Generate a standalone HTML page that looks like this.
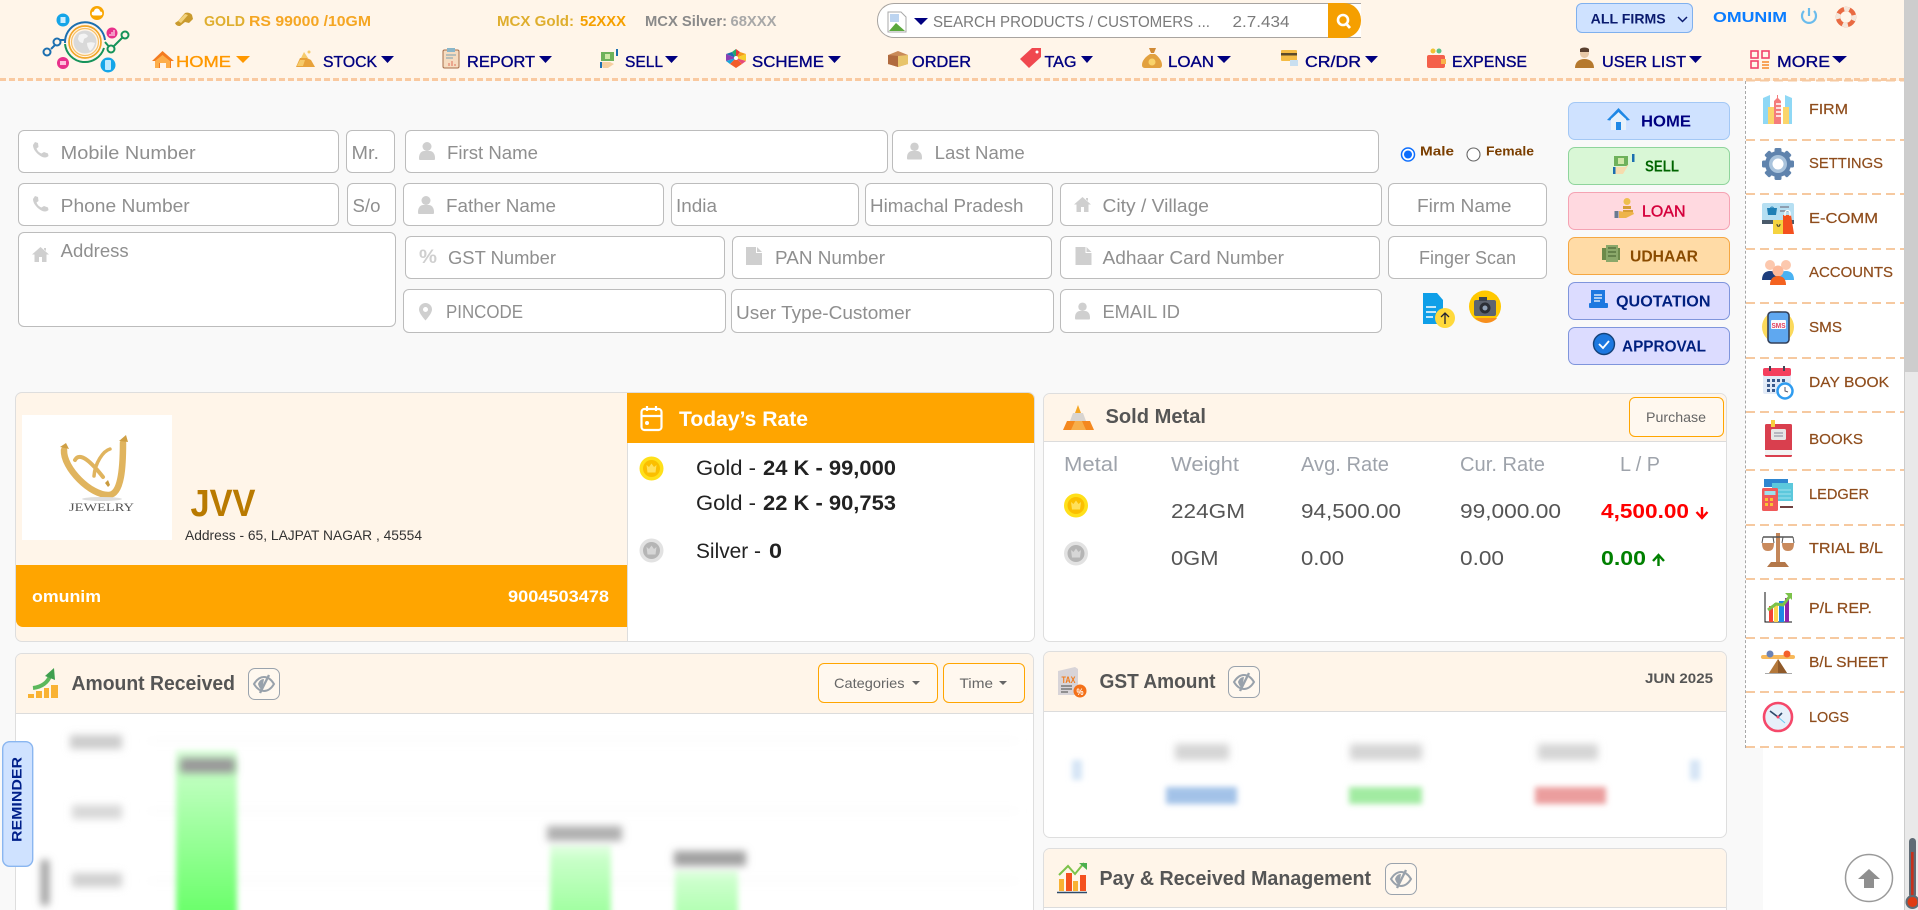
<!DOCTYPE html>
<html lang="en"><head><meta charset="utf-8"><title>Dashboard</title>
<style>
html,body{margin:0;padding:0;width:1918px;height:910px;overflow:hidden;background:#f9f9f9;font-family:"Liberation Sans",sans-serif}
#root{position:relative;width:1918px;height:910px;overflow:hidden;background:#f9f9f9}
.b{position:absolute;box-sizing:border-box}
.i{position:absolute;box-sizing:border-box;background:#fff;border:1.5px solid #bcbcbc;border-radius:6px}
.btn{position:absolute;box-sizing:border-box;left:1568px;width:162px;height:38px;border-radius:7px;border:1.5px solid}
.card{position:absolute;box-sizing:border-box;background:#fff;border:1.5px solid #dedede;border-radius:7px;overflow:hidden}
.ch{position:absolute;left:0;right:0;top:0;background:#fff5e9;border-bottom:1.5px solid #dcdcdc}
.ob{position:absolute;box-sizing:border-box;border:1.5px solid #ffa500;border-radius:6px;background:#fff8ef}
.eye{position:absolute;box-sizing:border-box;border:1.5px solid #9aa3ad;border-radius:7px;background:#fff8ef}
svg#o{position:absolute;left:0;top:0;width:1918px;height:910px}
text{font-family:"Liberation Sans",sans-serif}
.ph{font-size:18px;fill:#8f8f8f}
.nav{font-size:16px;fill:#000080;stroke:#000080;stroke-width:.35}
.side{font-size:14.5px;fill:#8f4d1c;stroke:#8f4d1c;stroke-width:.2}
.bt{font-size:15.5px;font-weight:700}
.hd{font-size:20px;font-weight:700;fill:#555}
.th{font-size:20px;fill:#9ea3ab}
.td{font-size:20.5px;fill:#555}
.rt{font-size:21px;fill:#222}
.rb{font-size:21px;fill:#222;font-weight:700}
</style></head><body><div id="root">

<!-- header -->
<div class="b" style="left:0;top:0;width:1905px;height:78px;background:#fff5e9"></div>
<div class="b" style="left:0;top:78px;width:1905px;height:3px;background:repeating-linear-gradient(90deg,#f9c9a0 0 6px,transparent 6px 9px);background-color:#fff5e9"></div>
<div class="b" style="left:877px;top:3px;width:484px;height:35px;background:#fff;border:1.5px solid #a8a4a0;border-radius:17px 0 0 17px;border-right:0"></div>
<div class="b" style="left:1328px;top:3px;width:33px;height:35px;background:#f59f00;border-radius:0 17px 17px 0"></div>
<div class="b" style="left:1576px;top:3px;width:117px;height:30px;background:#cfe2ff;border:1.5px solid #7fb0ee;border-radius:6px"></div>

<!-- sidebar & scrollbar -->
<div class="b" style="left:1763px;top:81px;width:142px;height:829px;background:#fff"></div>
<div class="b" style="left:1745px;top:81px;width:159px;height:667px;background:#fff;border-left:1px dashed #a8a8a8"></div>
<div class="b" style="left:1904px;top:0;width:14px;height:910px;background:#e9e9e9;border-left:1px solid #ccc"></div>
<div class="b" style="left:1905px;top:0;width:13px;height:372px;background:#cdcdcd"></div>

<!-- form -->
<div class="i" style="left:18px;top:130px;width:321px;height:43px"></div>
<div class="i" style="left:346px;top:130px;width:49px;height:43px"></div>
<div class="i" style="left:405px;top:130px;width:483px;height:43px"></div>
<div class="i" style="left:892px;top:130px;width:487px;height:43px"></div>
<div class="i" style="left:18px;top:183px;width:321px;height:43px"></div>
<div class="i" style="left:347px;top:183px;width:49px;height:43px"></div>
<div class="i" style="left:403px;top:183px;width:261px;height:43px"></div>
<div class="i" style="left:671px;top:183px;width:188px;height:43px"></div>
<div class="i" style="left:865px;top:183px;width:188px;height:43px"></div>
<div class="i" style="left:1060px;top:183px;width:322px;height:43px"></div>
<div class="i" style="left:1388px;top:183px;width:159px;height:43px"></div>
<div class="i" style="left:18px;top:232px;width:378px;height:95px"></div>
<div class="i" style="left:405px;top:236px;width:320px;height:43px"></div>
<div class="i" style="left:732px;top:236px;width:320px;height:43px"></div>
<div class="i" style="left:1060px;top:236px;width:320px;height:43px"></div>
<div class="i" style="left:1388px;top:236px;width:159px;height:43px"></div>
<div class="i" style="left:403px;top:289px;width:323px;height:44px"></div>
<div class="i" style="left:731px;top:289px;width:323px;height:44px"></div>
<div class="i" style="left:1060px;top:289px;width:322px;height:44px"></div>

<div class="btn" style="top:102px;background:#cfe2ff;border-color:#a3c8f5"></div>
<div class="btn" style="top:147px;background:#d9f7d6;border-color:#8fd49c"></div>
<div class="btn" style="top:192px;background:#ffd9e0;border-color:#f5a3b3"></div>
<div class="btn" style="top:237px;background:#ffdba6;border-color:#f5a742"></div>
<div class="btn" style="top:282px;background:#dcdcff;border-color:#7f95dc"></div>
<div class="btn" style="top:327px;background:#dcdcff;border-color:#7f95dc"></div>

<!-- firm card + today's rate -->
<div class="card" style="left:15px;top:392px;width:1020px;height:250px;background:#fff5e9">
  <div class="b" style="left:6px;top:22px;width:150px;height:125px;background:#fff"></div>
  <div class="b" style="left:0;top:172px;width:611px;height:62px;background:#ffa500;border-radius:0 0 0 7px"></div>
  <div class="b" style="left:611px;top:0;width:408px;height:248px;background:#fff;border-left:1px solid #ddd"></div>
  <div class="b" style="left:611px;top:0;width:408px;height:50px;background:#ffa500"></div>
</div>
<!-- sold metal -->
<div class="card" style="left:1043px;top:393px;width:684px;height:249px">
  <div class="ch" style="height:47px"></div>
</div>
<div class="ob" style="left:1629px;top:397px;width:95px;height:40px"></div>
<!-- amount received -->
<div class="card" style="left:15px;top:653px;width:1019px;height:265px">
  <div class="ch" style="height:59px"></div>
</div>
<div class="ob" style="left:818px;top:663px;width:120px;height:40px"></div>
<div class="ob" style="left:943px;top:663px;width:82px;height:40px"></div>
<div class="eye" style="left:248px;top:668px;width:32px;height:32px"></div>
<!-- gst -->
<div class="card" style="left:1043px;top:651px;width:684px;height:187px">
  <div class="ch" style="height:59px"></div>
</div>
<div class="eye" style="left:1228px;top:666px;width:32px;height:32px"></div>
<!-- pay -->
<div class="card" style="left:1043px;top:848px;width:684px;height:70px">
  <div class="ch" style="height:58px"></div>
</div>
<div class="eye" style="left:1385px;top:863px;width:32px;height:32px"></div>

<svg id="o" viewBox="0 0 1918 910" xmlns="http://www.w3.org/2000/svg">
<defs>
<filter id="bl" filterUnits="userSpaceOnUse" x="0" y="600" width="1918" height="400"><feGaussianBlur stdDeviation="4"/></filter>
<filter id="bs" filterUnits="userSpaceOnUse" x="0" y="600" width="1918" height="400"><feGaussianBlur stdDeviation="3"/></filter>
<linearGradient id="g1" gradientUnits="userSpaceOnUse" x1="0" y1="748" x2="0" y2="910"><stop offset="0" stop-color="#e2ffe2"/><stop offset=".12" stop-color="#c4ffc4"/><stop offset="1" stop-color="#6cff6c"/></linearGradient>
<linearGradient id="g2" gradientUnits="userSpaceOnUse" x1="0" y1="843" x2="0" y2="910"><stop offset="0" stop-color="#e8ffe8"/><stop offset=".25" stop-color="#c8ffc8"/><stop offset="1" stop-color="#a2ffa2"/></linearGradient>
<linearGradient id="g3" gradientUnits="userSpaceOnUse" x1="0" y1="868" x2="0" y2="910"><stop offset="0" stop-color="#e8ffe8"/><stop offset=".3" stop-color="#ccffcc"/><stop offset="1" stop-color="#b4ffb4"/></linearGradient>
<symbol id="coin" viewBox="0 0 25 25"><circle cx="12.5" cy="12.5" r="12" fill="#ffe01a"/><circle cx="12.5" cy="12.5" r="8.5" fill="#fbbf00"/><path d="M7.5 9l2.500 2 2.500-3.500 2.500 3.500 2.500-2-1 7.500h-8z" fill="#ffe05a"/></symbol>
<symbol id="silver" viewBox="0 0 25 25"><circle cx="12.5" cy="12.5" r="12" fill="#e2e2e2"/><circle cx="12.5" cy="12.5" r="8.5" fill="#b5b5b5"/><path d="M7.500 9l2.500 2 2.500-3.500 2.500 3.500 2.500-2-1 7.500h-8z" fill="#d6d6d6"/></symbol>
<symbol id="eye" viewBox="0 0 32 32"><path d="M6 16c3-5 6-7 10-7s7 2 10 7c-3 5-6 7-10 7s-7-2-10-7z" fill="none" stroke="#98a1ab" stroke-width="2"/><path d="M10 16c1-3 3-5 6-5l-2 11c-2-1-3-3-4-6z" fill="#98a1ab"/><path d="M21 7L12 25" stroke="#98a1ab" stroke-width="2.400"/></symbol>
<symbol id="ph" viewBox="0 0 18 16"><path d="M3 0l3 1 .5 4-2 1.500c1 2.500 2.500 4 5 5L12 10l4 1.500.5 2.500c-2 2-5 2-8 0C4 11 1 7 1 3z" fill="#cfcfcf"/></symbol>
<symbol id="us" viewBox="0 0 16 18"><circle cx="8" cy="4.500" r="4.500" fill="#cfcfcf"/><path d="M1 18c-1 0-1-1-1-2 0-5 3-7 5-7h6c2 0 5 2 5 7 0 1 0 2-1 2z" fill="#cfcfcf"/></symbol>
<symbol id="hm" viewBox="0 0 17 15"><path d="M8.500 0L17 7.500h-2.500V15H10v-5H7v5H2.500V7.500H0zM12 1h2v3l-2-1.500z" fill="#cfcfcf"/></symbol>
<symbol id="doc" viewBox="0 0 16 18"><path d="M0 0h10v6h6v12H0zM11 0l5 5h-5z" fill="#cfcfcf"/></symbol>
</defs>

<!-- logo -->
<g fill="none" stroke-width="2">
<path d="M100 29A20 20 0 0 0 65 43" stroke="#1c6fb0"/>
<path d="M65 44A20 20 0 0 0 104 48" stroke="#16935a"/>
<path d="M100 29A20 20 0 0 1 105 40" stroke="#1c6fb0"/>
<circle cx="85" cy="42" r="16" stroke="#f2a629" stroke-width="1.700"/><circle cx="85" cy="42" r="13.500" stroke="#f7c066" stroke-width="1.200"/>
<path d="M65 40h-5l-9 9" stroke="#1c6fb0"/><circle cx="57" cy="42" r="3.500" fill="#fff5e9" stroke="#1c6fb0"/><circle cx="47" cy="52" r="3.500" fill="#fff5e9" stroke="#1c6fb0"/>
<path d="M105 42l6 7 14-14" stroke="#16935a"/><circle cx="111" cy="49" r="3.500" fill="#fff5e9" stroke="#16935a"/><circle cx="125" cy="35" r="3.500" fill="#fff5e9" stroke="#16935a"/>
</g>
<circle cx="85" cy="42" r="11.500" fill="#d9d9d9"/><path d="M79 35c4-2 7-2 9 1-1 2-3 2-4 3l-1 4c-2 0-4-1-5-4zM87 43c3-1 5-1 8 0-1 3-2 6-5 8-2-3-3-5-3-8z" fill="#f4f4f4"/>
<circle cx="97" cy="13" r="7" fill="#f9a602"/><path d="M93.500 15.500a2 2 0 0 1 .5-4 3 3 0 0 1 6 0 2 2 0 0 1 .5 4z" fill="#fff"/>
<circle cx="63" cy="20" r="6.500" fill="#15a5e8"/><rect x="60.500" y="17" width="5" height="6" fill="#cdeeff"/>
<circle cx="112" cy="33" r="5.500" fill="#e8318b"/><path d="M109.500 36v-2h1v2zM111.500 36v-4h1v4zM113.500 36v-6h1v6z" fill="#fff"/>
<circle cx="108" cy="65" r="7.500" fill="#15a5e8"/><rect x="105" y="60" width="6" height="10" rx="1" fill="#bfe9ff"/>
<circle cx="63" cy="63" r="6" fill="#e8318b"/><rect x="60" y="61" width="6" height="4" fill="#ffc0dd"/>

<!-- top bar text -->
<path d="M175 23l3-2 7-8c2-1 6 0 7 2l1 4-4 4-4-1-5 4c-3 0-4-1-5-3z" fill="#c99a2e"/><path d="M178 21l7-7 3 1-7 8z" fill="#f3d27c"/>
<text x="204" y="26" textLength="41" lengthAdjust="spacingAndGlyphs" font-size="14.5" font-weight="700" fill="#dfae2e">GOLD</text>
<text x="249" y="26" textLength="122" lengthAdjust="spacingAndGlyphs" font-size="14.5" font-weight="700" fill="#f5a623">RS 99000 /10GM</text>
<text x="497" y="26" textLength="77" lengthAdjust="spacingAndGlyphs" font-size="14.5" font-weight="700" fill="#dfae2e">MCX Gold:</text>
<text x="580" y="26" textLength="46" lengthAdjust="spacingAndGlyphs" font-size="14.5" font-weight="700" fill="#f5a000">52XXX</text>
<text x="645" y="26" textLength="82" lengthAdjust="spacingAndGlyphs" font-size="14.5" font-weight="700" fill="#8a8a8a">MCX Silver:</text>
<text x="730.5" y="26" textLength="46" lengthAdjust="spacingAndGlyphs" font-size="14.5" font-weight="700" fill="#a8a8a8">68XXX</text>

<!-- search -->
<path d="M888 12h13l5 5v15h-18z" fill="#fff" stroke="#a9a9a9"/><path d="M889 31l7-8 9 8z" fill="#5aa83c"/><rect x="890" y="14" width="9" height="8" fill="#bcd4f0"/>
<path d="M914 18h14l-7 7z" fill="#000080"/>
<text x="933" y="27" textLength="277" lengthAdjust="spacingAndGlyphs" font-size="15.5" fill="#7a7a7a">SEARCH PRODUCTS / CUSTOMERS ...</text>
<text x="1232.5" y="27" textLength="57" lengthAdjust="spacingAndGlyphs" font-size="15.5" fill="#7a7a7a">2.7.434</text>
<circle cx="1343" cy="20" r="5" fill="none" stroke="#fff" stroke-width="2.6"/><path d="M1346.5 24l3.500 4" stroke="#fff" stroke-width="2.8"/>

<text x="1590.7" y="23.5" textLength="75" lengthAdjust="spacingAndGlyphs" font-size="14" font-weight="700" fill="#0a1a6e">ALL FIRMS</text>
<path d="M1678 17l4.500 4.500 4.500-4.500" fill="none" stroke="#0a1a6e" stroke-width="1.5"/>
<text x="1713" y="22" textLength="74" lengthAdjust="spacingAndGlyphs" font-size="14.5" font-weight="700" fill="#0a7cff">OMUNIM</text>
<path d="M1804 11a7 7 0 1 0 10 0" fill="none" stroke="#6bbcec" stroke-width="2.2"/><path d="M1809 8v8" stroke="#6bbcec" stroke-width="2.2"/>
<circle cx="1846" cy="17" r="8" fill="none" stroke="#e96a42" stroke-width="4.5"/><circle cx="1846" cy="17" r="8" fill="none" stroke="#f4e6da" stroke-width="4.5" stroke-dasharray="5.5 7" stroke-dashoffset="2"/>

<!-- nav -->
<path d="M162.500 51L174 61h-3v7h-5v-5h-6v5h-5v-7h-3z" fill="#f47b20"/><path d="M155 61l7.500-6 7.500 6v7h-4v-5h-7v5h-4z" fill="#fdae4b"/>
<text x="176" y="67" textLength="55" lengthAdjust="spacingAndGlyphs" class="nav" style="fill:#ff9800;stroke:#ff9800">HOME</text><path d="M236 56h14l-7 7z" fill="#ff9800"/>
<path d="M296 67l4-9h7l4 2 4 7z" fill="#e8a23a"/><path d="M301 58l3-6 4 6zM297 66l3-6h5l-2 6z" fill="#f6ca6a"/><circle cx="309" cy="52" r="1.500" fill="#f6ca6a"/>
<text x="323" y="67" textLength="54" lengthAdjust="spacingAndGlyphs" class="nav">STOCK</text><path d="M381 56h13l-6.500 7z" fill="#000080"/>
<rect x="443" y="50" width="16" height="18" rx="1.500" fill="#f6dcc0" stroke="#a56d49"/><rect x="447" y="48" width="8" height="4" fill="#8ab6c9"/><path d="M446 55h10M446 58h7" stroke="#7aa0b0"/><path d="M449 66v-3M452 66v-5M455 66v-2" stroke="#e0705a"/>
<text x="467" y="67" textLength="68" lengthAdjust="spacingAndGlyphs" class="nav">REPORT</text><path d="M539 56h13l-6.500 7z" fill="#000080"/>
<rect x="601" y="52" width="13" height="9" fill="#6eb25b"/><rect x="605" y="54" width="5" height="5" fill="#cfe8a8"/><rect x="616" y="49" width="2" height="7" fill="#1c6fb0"/><path d="M600 62h10l4 2-6 4h-5z" fill="#f6cfa0"/><rect x="600" y="62" width="2" height="6" fill="#1c6fb0"/>
<text x="625" y="67" textLength="38" lengthAdjust="spacingAndGlyphs" class="nav">SELL</text><path d="M665 56h13l-6.500 7z" fill="#000080"/>
<path d="M736 49l4 3-4 6z" fill="#e63a3a"/><path d="M736 49l-4 3 4 6z" fill="#24a86b"/><path d="M740 52l6 2-10 4z" fill="#f49b1a"/><path d="M732 52l-6 2 10 4z" fill="#1c6fb0"/><path d="M746 54v7l-10-3z" fill="#f7ce2d"/><path d="M726 54v7l10-3z" fill="#8d3fb5"/><path d="M746 61l-4 3-6-6z" fill="#e64a7a"/><path d="M726 61l4 3 6-6z" fill="#1ca5d8"/><path d="M736 58l6 6-6 4-6-4z" fill="#f25c2a"/><circle cx="736" cy="58" r="2" fill="#fff"/>
<text x="752" y="67" textLength="72" lengthAdjust="spacingAndGlyphs" class="nav">SCHEME</text><path d="M828 56h13l-6.500 7z" fill="#000080"/>
<path d="M898 51l10 4v9l-10 3-10-3v-9z" fill="#c98a58"/><path d="M898 56l10-1v9l-10 3z" fill="#e8c46a"/><path d="M888 55l10 1v11l-10-3z" fill="#b06a3e"/>
<text x="912" y="67" textLength="59" lengthAdjust="spacingAndGlyphs" class="nav">ORDER</text>
<path d="M1032 48h9v9l-12 11-9-9z" fill="#f0484f"/><circle cx="1037" cy="52" r="1.500" fill="#fff"/>
<text x="1044.5" y="67" textLength="32" lengthAdjust="spacingAndGlyphs" class="nav">TAG</text><path d="M1081 56h12l-6 7z" fill="#000080"/>
<path d="M1149 48h7l-2 5h-3z" fill="#d08a35"/><path d="M1150 54h5c4 3 7 7 7 11 0 2-1 3-3 3h-14c-2 0-3-1-3-3 0-4 3-8 8-11z" fill="#e2a13f"/><circle cx="1152" cy="62" r="3.500" fill="#f9d36b"/>
<text x="1168" y="67" textLength="46" lengthAdjust="spacingAndGlyphs" class="nav">LOAN</text><path d="M1217 56h14l-7 7z" fill="#000080"/>
<rect x="1281" y="50" width="16" height="11" rx="1" fill="#f5bc45"/><rect x="1281" y="53" width="16" height="2.500" fill="#5c4a2a"/><rect x="1290" y="60" width="8" height="6" fill="#c9dff0"/>
<text x="1305" y="67" textLength="56" lengthAdjust="spacingAndGlyphs" class="nav">CR/DR</text><path d="M1365 56h13l-6.500 7z" fill="#000080"/>
<rect x="1427" y="55" width="18" height="13" rx="2" fill="#f4604a"/><circle cx="1433" cy="51" r="2.500" fill="#f1c232"/><circle cx="1439" cy="51" r="2.500" fill="#5cc088"/><rect x="1441" y="59" width="5" height="5" fill="#f9b24a"/>
<text x="1452" y="67" textLength="75" lengthAdjust="spacingAndGlyphs" class="nav">EXPENSE</text>
<circle cx="1584.5" cy="53.5" r="4.500" fill="#e8c9a8"/><path d="M1580 49c2-2 7-2 9 0v3h-9z" fill="#5a4030"/><path d="M1575 68c0-6 4-9 9.500-9s9.500 3 9.500 9z" fill="#b5792e"/>
<text x="1602" y="67" textLength="84" lengthAdjust="spacingAndGlyphs" class="nav">USER LIST</text><path d="M1689 56h13l-6.500 7z" fill="#000080"/>
<g fill="none" stroke="#f2416b" stroke-width="1.6"><rect x="1751" y="51" width="7" height="7"/><rect x="1762" y="51" width="7" height="7"/><rect x="1751" y="61" width="7" height="7"/></g><path d="M1762 62h7M1762 65h7M1762 68h7" stroke="#f58a2a" stroke-width="1.5"/>
<text x="1777" y="67" textLength="53" lengthAdjust="spacingAndGlyphs" class="nav">MORE</text><path d="M1832 56h15l-7.500 7z" fill="#000080"/>

<!-- form icons -->
<use href="#ph" x="32" y="142" width="18" height="16"/><use href="#ph" x="32" y="196" width="18" height="16"/>
<use href="#us" x="419" y="142" width="16" height="18"/><use href="#us" x="418" y="196" width="16" height="18"/>
<use href="#us" x="907" y="142" width="15" height="18"/><use href="#us" x="1075" y="302" width="15" height="18"/>
<use href="#hm" x="32" y="247" width="17" height="15"/><use href="#hm" x="1074" y="197" width="17" height="15"/>
<use href="#doc" x="746" y="247" width="16" height="18"/><use href="#doc" x="1075.5" y="247" width="16" height="18"/>
<text x="419" y="263" font-size="19" font-weight="700" fill="#cfcfcf" textLength="18" lengthAdjust="spacingAndGlyphs">%</text>
<path d="M425.500 303a6.500 6.500 0 0 1 6.500 6.500c0 3-3 7-6.500 11-3.500-4-6.500-8-6.500-11a6.500 6.500 0 0 1 6.500-6.500zm0 4a2.500 2.500 0 1 0 0 5 2.500 2.500 0 0 0 0-5z" fill="#cfcfcf"/>

<!-- form text -->
<text class="ph" x="60.7" y="159" textLength="135" lengthAdjust="spacingAndGlyphs">Mobile Number</text>
<text class="ph" x="351.5" y="159" textLength="27.5" lengthAdjust="spacingAndGlyphs">Mr.</text>
<text class="ph" x="447" y="159" textLength="91" lengthAdjust="spacingAndGlyphs">First Name</text>
<text class="ph" x="934.7" y="159" textLength="90" lengthAdjust="spacingAndGlyphs">Last Name</text>
<text class="ph" x="60.7" y="212" textLength="129" lengthAdjust="spacingAndGlyphs">Phone Number</text>
<text class="ph" x="352.5" y="212" textLength="28" lengthAdjust="spacingAndGlyphs">S/o</text>
<text class="ph" x="446" y="212" textLength="110" lengthAdjust="spacingAndGlyphs">Father Name</text>
<text class="ph" x="676" y="212" textLength="41" lengthAdjust="spacingAndGlyphs">India</text>
<text class="ph" x="870" y="212" textLength="153.5" lengthAdjust="spacingAndGlyphs">Himachal Pradesh</text>
<text class="ph" x="1102.5" y="212" textLength="106.5" lengthAdjust="spacingAndGlyphs">City / Village</text>
<text class="ph" x="1417" y="212" textLength="94.5" lengthAdjust="spacingAndGlyphs">Firm Name</text>
<text class="ph" x="60.7" y="257" textLength="68" lengthAdjust="spacingAndGlyphs">Address</text>
<text class="ph" x="448" y="264" textLength="108" lengthAdjust="spacingAndGlyphs">GST Number</text>
<text class="ph" x="775" y="264" textLength="110" lengthAdjust="spacingAndGlyphs">PAN Number</text>
<text class="ph" x="1102.5" y="264" textLength="181.5" lengthAdjust="spacingAndGlyphs">Adhaar Card Number</text>
<text class="ph" x="1419" y="264" textLength="97" lengthAdjust="spacingAndGlyphs">Finger Scan</text>
<text class="ph" x="446" y="318" textLength="77" lengthAdjust="spacingAndGlyphs">PINCODE</text>
<text class="ph" x="736" y="319" textLength="175" lengthAdjust="spacingAndGlyphs">User Type-Customer</text>
<text class="ph" x="1102.5" y="318" textLength="77.5" lengthAdjust="spacingAndGlyphs">EMAIL ID</text>

<!-- radios -->
<circle cx="1408" cy="154.5" r="6.500" fill="#fff" stroke="#0d6efd" stroke-width="1.5"/><circle cx="1408" cy="154.5" r="4" fill="#0d6efd"/>
<text x="1420" y="155.5" textLength="34" lengthAdjust="spacingAndGlyphs" font-size="13" font-weight="700" fill="#7a3e00">Male</text>
<circle cx="1473.5" cy="154.5" r="6.500" fill="#fff" stroke="#666" stroke-width="1.1"/>
<text x="1486" y="155.5" textLength="48" lengthAdjust="spacingAndGlyphs" font-size="13" font-weight="700" fill="#7a3e00">Female</text>

<!-- upload / camera -->
<path d="M1423 293h14l6 7v24h-20z" fill="#0f9fe8"/><path d="M1426 307h10M1426 312h10M1426 317h7" stroke="#fff" stroke-width="1.5"/>
<circle cx="1445" cy="318" r="10" fill="#ffd93b"/><path d="M1445 324v-11M1441 317l4-4 4 4" fill="none" stroke="#223" stroke-width="1.3"/>
<circle cx="1485" cy="306.5" r="16" fill="#ffc800"/><path d="M1475 318h22c-2 3-7 5-11 5s-8-2-11-5z" fill="#f78f1e"/>
<rect x="1474" y="300" width="22" height="16" rx="2" fill="#5d6470"/><rect x="1479" y="297" width="8" height="4" fill="#3f454f"/><circle cx="1485" cy="308" r="5.500" fill="#2b2f36"/><circle cx="1485" cy="308" r="2.500" fill="#8fa0b5"/>

<!-- action buttons -->
<path d="M1618.500 108l11.500 12-3 .5-8.500-8.500-8.500 8.500-3-.5z" fill="#1e88e5"/><path d="M1611 119l7.500-6.500 7.500 6.500v11h-15z" fill="#e6f1fb"/><rect x="1616" y="122" width="5" height="8" fill="#1e88e5"/>
<text x="1641" y="126.5" textLength="50" lengthAdjust="spacingAndGlyphs" class="bt" fill="#000080">HOME</text>
<rect x="1614" y="156" width="14" height="10" fill="#6eb25b"/><rect x="1618" y="158" width="6" height="6" fill="#cfe8a8"/><rect x="1632" y="154" width="2.5" height="8" fill="#1c6fb0"/><path d="M1615 167h10l4-3-6 10h-8z" fill="#f6dcae"/><rect x="1613" y="167" width="2.5" height="7" fill="#1c6fb0"/>
<text x="1645" y="171.500" textLength="34" lengthAdjust="spacingAndGlyphs" class="bt" fill="#006400">SELL</text>
<circle cx="1627" cy="201.5" r="3.500" fill="#eebf4f"/><path d="M1623 206h8v3h-8zM1623 210h10v2h-10z" fill="#d79e37"/><path d="M1614.500 211h4v7h-4z" fill="#6a7a90"/><path d="M1619 211l6 1h8l1 2-8 4h-7z" fill="#eeb44a"/>
<text x="1642" y="216.5" textLength="43.5" lengthAdjust="spacingAndGlyphs" class="bt" fill="#d4003c" style="font-weight:400;stroke:#d4003c;stroke-width:.4">LOAN</text>
<path d="M1602 248h18v12h-18z" fill="#6d8a4a"/><path d="M1606 245h12v17h-12z" fill="#8ba86a"/><path d="M1608 248h8M1608 252h8M1608 256h8" stroke="#3f5a2a"/>
<text x="1630" y="261.5" textLength="68" lengthAdjust="spacingAndGlyphs" class="bt" fill="#8a4b00">UDHAAR</text>
<path d="M1591 290h14v14h-14z" fill="#1c78e0"/><rect x="1589" y="303" width="19" height="5" rx="1" fill="#1c78e0"/><path d="M1594 295h8M1594 298h8M1594 301h6" stroke="#fff" stroke-width="1.2"/>
<text x="1616" y="306.5" textLength="94.5" lengthAdjust="spacingAndGlyphs" class="bt" fill="#00207f">QUOTATION</text>
<circle cx="1604" cy="344" r="10.500" fill="#1c78e0" stroke="#14427a" stroke-width="1.4"/><path d="M1599 344l4 4 6-7" fill="none" stroke="#fff" stroke-width="1.8"/>
<text x="1622" y="351.5" textLength="84" lengthAdjust="spacingAndGlyphs" class="bt" fill="#00207f">APPROVAL</text>

<!-- sidebar lines -->
<g stroke="#f6c9a0" stroke-width="2" stroke-dasharray="9 5">
<path d="M1746 80.5H1904M1746 140H1904M1746 194H1904M1746 249H1904M1746 303H1904M1746 358H1904M1746 412H1904M1746 470H1904M1746 525H1904M1746 579H1904M1746 638H1904M1746 692H1904M1746 747H1904"/>
</g>
<!-- sidebar icons -->
<path d="M1763 98l7-3v29h-7zM1792 98l-7-3v29h7z" fill="#8fd8f5"/><path d="M1768 107h6v17h-6zM1783 107h6v17h-6z" fill="#fbd56b"/><path d="M1774 101l3-3v-3h1v3l3 3v23h-7z" fill="#f47c7c"/><path d="M1776 104h6M1776 108h6M1776 112h6M1776 116h6" stroke="#fff" stroke-width="1.4"/>
<g fill="#5f83ad"><circle cx="1778" cy="164" r="13"/><rect x="1774.5" y="148" width="7" height="32" rx="1.500"/><rect x="1774.5" y="148" width="7" height="32" rx="1.500" transform="rotate(45 1778 164)"/><rect x="1774.5" y="148" width="7" height="32" rx="1.500" transform="rotate(90 1778 164)"/><rect x="1774.5" y="148" width="7" height="32" rx="1.500" transform="rotate(135 1778 164)"/></g><circle cx="1778" cy="164" r="9" fill="#a9c3dc"/><circle cx="1778" cy="164" r="5.500" fill="#fff"/>
<rect x="1762" y="203" width="32" height="21" rx="2" fill="#b6dff2"/><rect x="1762" y="220" width="32" height="4" fill="#4a5a6a"/><path d="M1767 208h10l-1 7h-8z" fill="#1f7fb5"/><path d="M1770 210a2 3 0 0 1 4 0" fill="none" stroke="#1f7fb5"/><path d="M1780 207h9M1780 211h9" stroke="#778" stroke-width="1.3"/>
<path d="M1773 229h16" stroke="#334" stroke-width="2"/><path d="M1773 220h10v14h-10z" fill="#f5d33f"/><path d="M1783 215h8l3 19h-11z" fill="#f4501e"/><path d="M1785 216v-3a2.500 2.500 0 0 1 5 0v3" fill="none" stroke="#fff" stroke-width="1.3"/><path d="M1777 224c0 3 3 3 3 0" fill="none" stroke="#333"/>
<circle cx="1770" cy="265" r="5" fill="#fcc8ae"/><circle cx="1786" cy="265" r="5" fill="#fcc8ae"/><path d="M1762 280c0-6 3-9 8-9s8 3 8 9z" fill="#1d3e7d"/><path d="M1778 280c0-6 3-9 8-9s8 3 8 9z" fill="#4ab2f2"/><circle cx="1778" cy="271" r="5.500" fill="#fdb99a"/><path d="M1770 285c0-6 3-9 8-9s8 3 8 9z" fill="#f4621f"/>
<circle cx="1778" cy="327" r="16" fill="#fbd95b"/><rect x="1768" y="312" width="21" height="31" rx="3.500" fill="#5fa8f0" stroke="#33405a" stroke-width="1.6"/><rect x="1771" y="320" width="15" height="9" rx="1" fill="#fff" opacity=".95"/><text x="1771.5" y="328" font-size="7" font-weight="700" fill="#e23b5a" textLength="14" lengthAdjust="spacingAndGlyphs">SMS</text>
<rect x="1763" y="368" width="28" height="26" rx="2" fill="#e3ebf7"/><rect x="1763" y="368" width="28" height="8" rx="2" fill="#f43f5e"/><path d="M1770 366v5M1784 366v5" stroke="#445" stroke-width="2"/><g fill="#3a5a8c"><rect x="1767" y="379" width="3" height="3"/><rect x="1772" y="379" width="3" height="3"/><rect x="1777" y="379" width="3" height="3"/><rect x="1782" y="379" width="3" height="3"/><rect x="1767" y="384" width="3" height="3"/><rect x="1772" y="384" width="3" height="3"/><rect x="1767" y="389" width="3" height="3"/><rect x="1772" y="389" width="3" height="3"/></g><circle cx="1785" cy="391" r="7.500" fill="#fff" stroke="#2f9cf0" stroke-width="2.5"/><path d="M1785 387v4l3 1" fill="none" stroke="#556"/>
<rect x="1765" y="424" width="27" height="33" rx="1.500" fill="#d93f4e"/><rect x="1765" y="450" width="27" height="5" fill="#f3f3f3"/><rect x="1771" y="420" width="4" height="7" fill="#f7cf3f"/><rect x="1771" y="429" width="15" height="11" rx="1.500" fill="#e6e6e6"/><path d="M1774 433h9M1774 436h9" stroke="#99a" stroke-width="1.3"/>
<rect x="1764" y="479" width="24" height="8" fill="#2f86d0"/><rect x="1772" y="483" width="21" height="18" fill="#5cc8dc"/><path d="M1776 490h15M1776 494h15M1776 498h15" stroke="#9fe2ee"/><rect x="1762" y="488" width="16" height="23" rx="1.500" fill="#f05a5a"/><rect x="1764.5" y="491" width="11" height="4" fill="#9fe2ee"/><g fill="#f9c534"><rect x="1765" y="498" width="3" height="3"/><rect x="1770" y="498" width="3" height="3"/><rect x="1765" y="503" width="3" height="3"/><rect x="1770" y="503" width="3" height="3"/></g><path d="M1780 507h13" stroke="#704040" stroke-width="2"/>
<rect x="1776" y="533" width="4" height="30" fill="#c4875a"/><path d="M1763 537h30" stroke="#555" stroke-width="1.5"/><path d="M1767 567h22l-4-5h-14z" fill="#b4784a"/><path d="M1762 543h12c0 6-2 8-6 8s-6-2-6-8zM1782 543h12c0 6-2 8-6 8s-6-2-6-8z" fill="#c98a5d"/><path d="M1763 537l-1 6M1773 537l1 6M1783 537l-1 6M1793 537l1 6" stroke="#555"/>
<path d="M1765 592v30h27" fill="none" stroke="#111" stroke-width="1"/><rect x="1769" y="606" width="4" height="16" fill="#f44336"/><rect x="1774" y="603" width="4" height="19" fill="#ffd54f"/><rect x="1779" y="601" width="5" height="21" fill="#1e88e5"/><rect x="1785" y="598" width="4" height="24" fill="#8e24aa"/><path d="M1768 610l8-6 7 1 7-9" fill="none" stroke="#7cc24a" stroke-width="3"/><path d="M1785 593h7v7z" fill="#7cc24a"/>
<path d="M1763 657h30" stroke="#f7b95b" stroke-width="4" stroke-linecap="round"/><circle cx="1770" cy="654" r="3.500" fill="#6b82b5"/><circle cx="1787" cy="654" r="3.500" fill="#f4602a"/><path d="M1778 659l9 14h-18z" fill="#b4783a"/><path d="M1778 659v14h9z" fill="#8f5a2a"/><path d="M1765 673.5h27" stroke="#aaa"/>
<circle cx="1778" cy="717" r="14" fill="#e7f0fa" stroke="#f5486a" stroke-width="2.6"/><path d="M1770 711l8 6 4-4" fill="none" stroke="#2e4a6a" stroke-width="1.7"/><path d="M1778 717l7 6" stroke="#69c8f2"/><circle cx="1778" cy="717" r="1.500" fill="#f5486a"/>
<!-- sidebar text -->
<text class="side" x="1809" y="114" textLength="39" lengthAdjust="spacingAndGlyphs">FIRM</text>
<text class="side" x="1809" y="168" textLength="74" lengthAdjust="spacingAndGlyphs">SETTINGS</text>
<text class="side" x="1809" y="223" textLength="69" lengthAdjust="spacingAndGlyphs">E-COMM</text>
<text class="side" x="1809" y="277" textLength="84" lengthAdjust="spacingAndGlyphs">ACCOUNTS</text>
<text class="side" x="1809" y="332" textLength="33" lengthAdjust="spacingAndGlyphs">SMS</text>
<text class="side" x="1809" y="387" textLength="80" lengthAdjust="spacingAndGlyphs">DAY BOOK</text>
<text class="side" x="1809" y="444" textLength="54" lengthAdjust="spacingAndGlyphs">BOOKS</text>
<text class="side" x="1809" y="499" textLength="60" lengthAdjust="spacingAndGlyphs">LEDGER</text>
<text class="side" x="1809" y="553" textLength="74" lengthAdjust="spacingAndGlyphs">TRIAL B/L</text>
<text class="side" x="1809" y="613" textLength="63" lengthAdjust="spacingAndGlyphs">P/L REP.</text>
<text class="side" x="1809" y="667" textLength="79" lengthAdjust="spacingAndGlyphs">B/L SHEET</text>
<text class="side" x="1809" y="722" textLength="40" lengthAdjust="spacingAndGlyphs">LOGS</text>
<!-- scroll top + thermometer -->
<circle cx="1869" cy="878" r="23.500" fill="#fff" stroke="#9a9a9a" stroke-width="1.5"/><path d="M1869 869l11 10h-6v9h-10v-9h-6z" fill="#8f8f8f"/>
<rect x="1909" y="838" width="7" height="60" rx="3.500" fill="#5f6b75"/><rect x="1911" y="852" width="2.600" height="48" fill="#c6301c"/><circle cx="1912.5" cy="902" r="7" fill="#5f6b75"/><circle cx="1912.5" cy="902" r="5" fill="#e03a12"/>

<!-- firm logo -->
<g fill="none" stroke="#e0b45e" stroke-linecap="round">
<path d="M64 450c-1 18 27 46 45 45 13-1 14-30 14-52" stroke-width="6.5"/>
<path d="M75 460c5-9 17 3 28 17" stroke-width="4"/>
<path d="M110 449c-7 2-15 14-16 27" stroke-width="3.5"/>
</g>
<path d="M60 447l6-4 3 6zM119 441l7-6 2 7z" fill="#cf9f44"/><path d="M105 483l3-3 2 5-2 2z" fill="#c99a3e"/>
<ellipse cx="102" cy="499" rx="20" ry="2" fill="#dedede"/>
<text x="69" y="511" textLength="65" lengthAdjust="spacingAndGlyphs" style="font-family:'Liberation Serif',serif" font-size="12" fill="#555">JEWELRY</text>

<text x="190.5" y="516" textLength="65" lengthAdjust="spacingAndGlyphs" font-size="38" font-weight="700" fill="#b97a00">JVV</text>
<text x="185" y="540" textLength="237" lengthAdjust="spacingAndGlyphs" font-size="14" fill="#333">Address - 65, LAJPAT NAGAR , 45554</text>
<text x="32" y="602" textLength="69" lengthAdjust="spacingAndGlyphs" font-size="17" font-weight="700" fill="#fff">omunim</text>
<text x="508" y="602" textLength="101" lengthAdjust="spacingAndGlyphs" font-size="17" font-weight="700" fill="#fff">9004503478</text>

<!-- today's rate -->
<g fill="none" stroke="#fff" stroke-width="2.2"><rect x="641.5" y="409" width="20" height="21" rx="3"/><path d="M641 416h21M647 406v5M656 406v5"/></g><circle cx="647" cy="423" r="2" fill="#fff"/>
<text x="679" y="426" textLength="129" lengthAdjust="spacingAndGlyphs" font-size="21" font-weight="700" fill="#fff">Today’s Rate</text>
<use href="#coin" x="639" y="456" width="25" height="25"/><use href="#silver" x="639" y="538" width="25" height="25"/>
<text class="rt" x="696" y="475" textLength="60" lengthAdjust="spacingAndGlyphs">Gold -</text><text class="rb" x="763" y="475" textLength="133" lengthAdjust="spacingAndGlyphs">24 K - 99,000</text>
<text class="rt" x="696" y="510" textLength="60" lengthAdjust="spacingAndGlyphs">Gold -</text><text class="rb" x="763" y="510" textLength="133" lengthAdjust="spacingAndGlyphs">22 K - 90,753</text>
<text class="rt" x="696" y="558" textLength="65" lengthAdjust="spacingAndGlyphs">Silver -</text><text class="rb" x="769" y="558" textLength="13" lengthAdjust="spacingAndGlyphs">0</text>

<!-- sold metal -->
<path d="M1078 405l3 8h-6z" fill="#f5a623"/><path d="M1073 413h10l3 8h-16z" fill="#d8d4d0"/><path d="M1063 430l4-9h8l3 9zM1079 430l3-9h8l4 9z" fill="#f4881f"/><path d="M1071 430l4-9h7l4 9z" fill="#f7ae4a"/>
<text class="hd" x="1105.5" y="423" textLength="100.5" lengthAdjust="spacingAndGlyphs">Sold Metal</text>
<text x="1646" y="422" textLength="60" lengthAdjust="spacingAndGlyphs" font-size="14" fill="#666">Purchase</text>
<text class="th" x="1064" y="471" textLength="54" lengthAdjust="spacingAndGlyphs">Metal</text>
<text class="th" x="1171" y="471" textLength="68" lengthAdjust="spacingAndGlyphs">Weight</text>
<text class="th" x="1301" y="471" textLength="88" lengthAdjust="spacingAndGlyphs">Avg. Rate</text>
<text class="th" x="1460" y="471" textLength="85" lengthAdjust="spacingAndGlyphs">Cur. Rate</text>
<text class="th" x="1620" y="471" textLength="40" lengthAdjust="spacingAndGlyphs">L / P</text>
<use href="#coin" x="1063.5" y="493" width="25" height="25"/><use href="#silver" x="1063.5" y="541" width="25" height="25"/>
<text class="td" x="1171" y="518" textLength="74" lengthAdjust="spacingAndGlyphs">224GM</text>
<text class="td" x="1301" y="518" textLength="100" lengthAdjust="spacingAndGlyphs">94,500.00</text>
<text class="td" x="1460" y="518" textLength="101" lengthAdjust="spacingAndGlyphs">99,000.00</text>
<text x="1601" y="518" textLength="88" lengthAdjust="spacingAndGlyphs" font-size="20.5" font-weight="700" fill="#f00">4,500.00</text>
<path d="M1702 507v9M1696.5 512l5.500 6 5.500-6" fill="none" stroke="#f00" stroke-width="2.4"/>
<text class="td" x="1171" y="565" textLength="47.5" lengthAdjust="spacingAndGlyphs">0GM</text>
<text class="td" x="1301" y="565" textLength="43" lengthAdjust="spacingAndGlyphs">0.00</text>
<text class="td" x="1460" y="565" textLength="44" lengthAdjust="spacingAndGlyphs">0.00</text>
<text x="1601" y="565" textLength="45" lengthAdjust="spacingAndGlyphs" font-size="20.5" font-weight="700" fill="#008000">0.00</text>
<path d="M1658.5 566v-9M1653 561l5.500-6 5.500 6" fill="none" stroke="#008000" stroke-width="2.4"/>

<!-- amount received head -->
<path d="M33 688c9-1 15-6 17-12" fill="none" stroke="#5cb85c" stroke-width="4"/><path d="M45 676l9-8 1 12z" fill="#3f9f4f"/>
<g fill="#f9b233"><rect x="28" y="694" width="6" height="4"/><rect x="36" y="691" width="6" height="7"/><rect x="44" y="688" width="5" height="10"/><rect x="51" y="685" width="7" height="13"/></g>
<text class="hd" x="71.5" y="690" textLength="163.5" lengthAdjust="spacingAndGlyphs">Amount Received</text>
<use href="#eye" x="248" y="668" width="32" height="32"/>
<text x="834" y="688" textLength="70.5" lengthAdjust="spacingAndGlyphs" font-size="14" fill="#666">Categories</text><path d="M912 681h8l-4 4z" fill="#666"/>
<text x="959.5" y="688" textLength="33.5" lengthAdjust="spacingAndGlyphs" font-size="14" fill="#666">Time</text><path d="M999 681h8l-4 4z" fill="#666"/>

<!-- chart (blurred) -->
<path d="M148 741H1018M148 811H1018M148 881H1018" stroke="#f7f7f7" stroke-width="2" filter="url(#bl)"/>
<rect x="176" y="750" width="61" height="175" fill="url(#g1)" filter="url(#bs)"/>
<rect x="550" y="845" width="61" height="80" fill="url(#g2)" filter="url(#bs)"/>
<rect x="675" y="870" width="63" height="55" fill="url(#g3)" filter="url(#bs)"/>
<g filter="url(#bl)">
<rect x="70" y="735" width="52" height="14" fill="#ccc"/><rect x="72" y="805" width="50" height="14" fill="#d8d8d8"/><rect x="72" y="873" width="50" height="14" fill="#d0d0d0"/>
<rect x="180" y="758" width="55" height="15" fill="#999"/>
<rect x="547" y="826" width="75" height="15" fill="#b0b0b0"/>
<rect x="674" y="851" width="72" height="15" fill="#a0a0a0"/>
<rect x="41" y="860" width="8" height="45" fill="#999"/>
</g>
<!-- reminder -->
<rect x="2.7" y="741.7" width="30" height="124.6" rx="7" fill="#cfe2ff" stroke="#8ab6f0" stroke-width="1.4"/>
<text transform="translate(21.5 842) rotate(-90)" x="0" y="0" textLength="85" lengthAdjust="spacingAndGlyphs" font-size="14" font-weight="700" fill="#00208a">REMINDER</text>

<!-- gst head -->
<path d="M1058 671l17-4 3 2v26h-20z" fill="#d8d4d8"/>
<text x="1061.5" y="683" font-size="9" font-weight="700" fill="#f07a1a" textLength="14" lengthAdjust="spacingAndGlyphs">TAX</text>
<path d="M1061 686h11M1061 689h11M1061 692h7" stroke="#666" stroke-width="1.2"/>
<circle cx="1080" cy="691" r="6.500" fill="#f4711a"/><text x="1076.5" y="695" font-size="9" font-weight="700" fill="#fff" textLength="7" lengthAdjust="spacingAndGlyphs">%</text>
<text class="hd" x="1099.5" y="688" textLength="116" lengthAdjust="spacingAndGlyphs">GST Amount</text>
<use href="#eye" x="1228" y="666" width="32" height="32"/>
<text x="1645" y="683" textLength="68" lengthAdjust="spacingAndGlyphs" font-size="14" font-weight="700" fill="#555">JUN 2025</text>
<g filter="url(#bl)">
<rect x="1175" y="744" width="54" height="16" fill="#d4d4d4"/><rect x="1350" y="744" width="72" height="16" fill="#d4d4d4"/><rect x="1538" y="744" width="60" height="16" fill="#d4d4d4"/>
</g>
<g filter="url(#bs)">
<rect x="1166" y="787" width="71" height="17" fill="#a3c2e8"/><rect x="1349" y="787" width="73" height="17" fill="#a2eba2"/><rect x="1535" y="787" width="71" height="17" fill="#eb9e9e"/>
<rect x="1072" y="760" width="10" height="20" fill="#d4e4f5"/><rect x="1690" y="760" width="10" height="20" fill="#d4e4f5"/>
</g>

<!-- pay head -->
<path d="M1059 875l9-9 7 8 9-11" fill="none" stroke="#7cc24a" stroke-width="2"/><path d="M1079 863h8v7z" fill="#4caf50"/>
<rect x="1059" y="879" width="5" height="12" fill="#f9b233"/><rect x="1066" y="873" width="6" height="18" fill="#f4511e"/><rect x="1073" y="881" width="5" height="10" fill="#f9b233"/><rect x="1080" y="875" width="6" height="16" fill="#f4511e"/><path d="M1057 892.5h30" stroke="#2e4a6a" stroke-width="1.5"/>
<text class="hd" x="1099.5" y="885" textLength="271.5" lengthAdjust="spacingAndGlyphs">Pay &amp; Received Management</text>
<use href="#eye" x="1385" y="863" width="32" height="32"/>
</svg>
</div></body></html>
